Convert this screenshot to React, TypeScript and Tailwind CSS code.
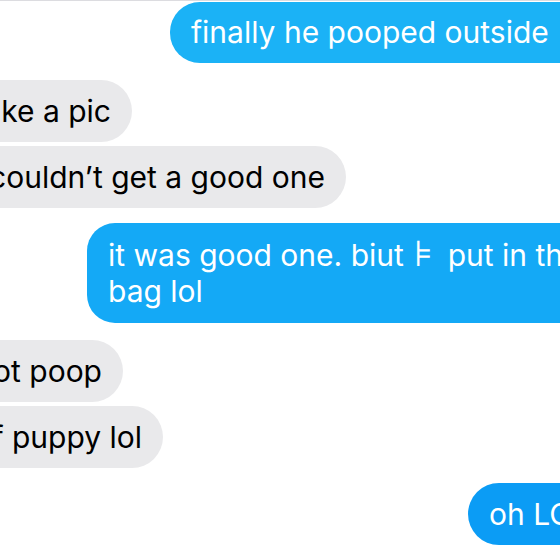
import React from "react";

const font = { fontFamily: "Inter, 'Noto Sans', sans-serif" };

function Incoming({ right, text }: { right: number; text: string }) {
  return (
    <div className="flex">
      <div
        className="flex h-[62px] shrink-0 items-center justify-end whitespace-nowrap rounded-r-[31px] bg-[#e9e9eb] pr-[21px] text-[30px] text-black"
        style={{ width: right }}
      >
        {text}
      </div>
    </div>
  );
}

export default function App() {
  return (
    <div className="relative h-[560px] w-[560px] overflow-hidden bg-white" style={font}>
      <div className="h-px w-full bg-[#dcdce0]" />
      <div className="flex flex-col pt-px">
        <div className="flex justify-start pl-[170px]">
          <div className="flex h-[61px] shrink-0 items-center whitespace-nowrap rounded-l-[30px] bg-[#1bb2f6] pl-[21px] pr-[60px] text-[30px] text-white">
            finally he pooped outside
          </div>
        </div>

        <div className="mt-[17px] flex flex-col gap-[4px]">
          <Incoming right={132} text="take a pic" />
          <Incoming right={346} text="couldn’t get a good one" />
        </div>

        <div className="mt-[15px] flex pl-[87px]">
          <div className="shrink-0 whitespace-nowrap rounded-l-[28px] bg-[#14a9f6] py-[14px] pl-[21px] pr-[60px] text-[30px] leading-[36px] text-white">
            it was good one. biut{" "}
            <span className="mr-[6px] ml-[2px] text-[36px] font-light leading-[0]">⊧</span>{" "}
            put in the
            <br />
            bag lol
          </div>
        </div>

        <div className="mt-[17px] flex flex-col gap-[4px]">
          <Incoming right={123} text="not poop" />
          <Incoming right={163} text="of puppy lol" />
        </div>

        <div className="mt-[15px] flex pl-[468px]">
          <div className="flex h-[62px] shrink-0 items-center whitespace-nowrap rounded-l-[31px] bg-[#0b9cf5] pl-[21px] pr-[60px] text-[30px] text-white">
            oh LOL
          </div>
        </div>
      </div>
    </div>
  );
}
